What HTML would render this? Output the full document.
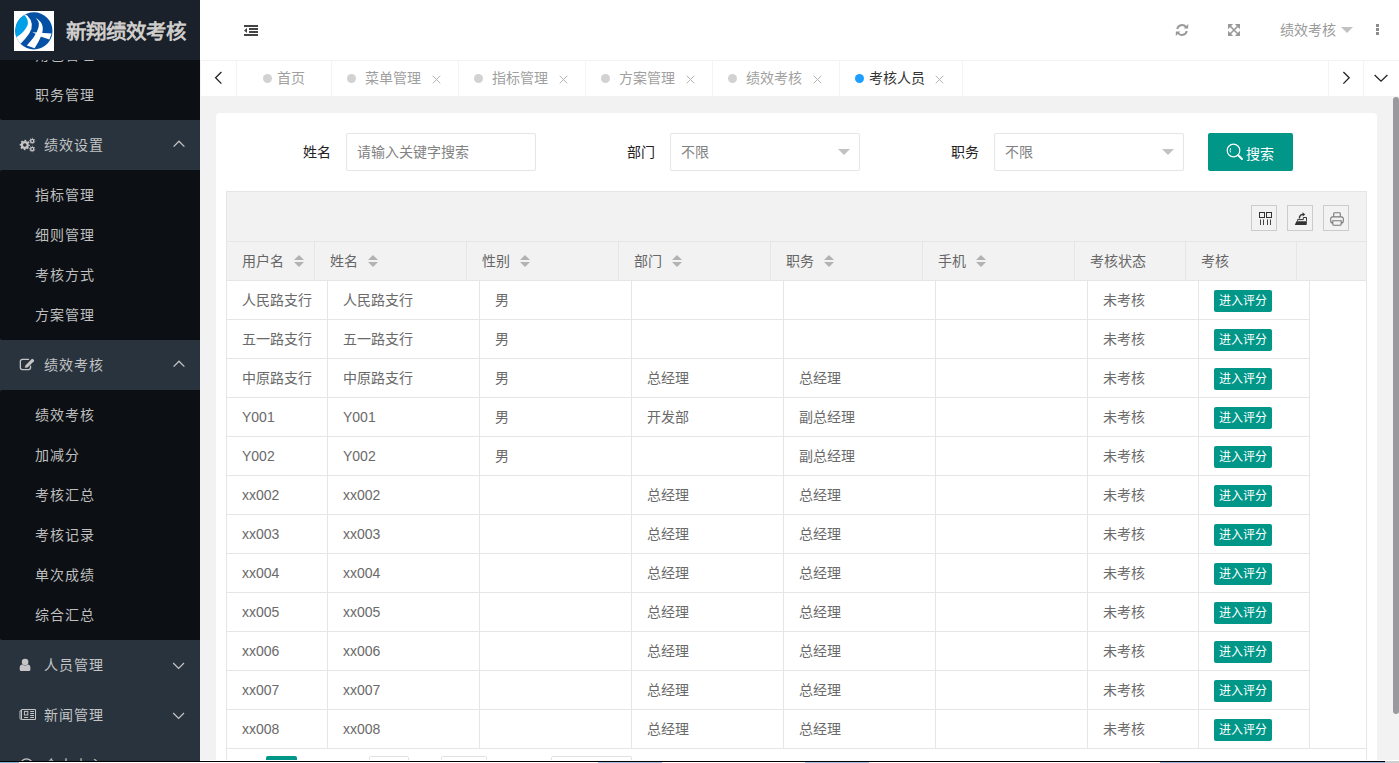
<!DOCTYPE html>
<html lang="zh-CN">
<head>
<meta charset="utf-8">
<title>新翔绩效考核</title>
<style>
*{box-sizing:border-box;margin:0;padding:0}
html,body{width:1399px;height:763px;overflow:hidden;background:#fff}
body{font-family:"Liberation Sans",sans-serif;font-size:14px;color:#666;position:relative}
.abs{position:absolute}
/* ---------- sidebar ---------- */
#side{position:absolute;left:0;top:0;width:200px;height:761px;background:#28333e;overflow:hidden}
#logo{position:absolute;left:0;top:0;width:200px;height:60px;background:#1b212a;z-index:3}
#logo .pic{position:absolute;left:14px;top:11px;width:40px;height:40px}
#logo .ttl{position:absolute;left:66px;top:1.5px;line-height:60px;font-size:20.5px;font-weight:bold;color:#cfcdcb;white-space:nowrap;letter-spacing:0}
.sub{position:absolute;left:0;width:200px;background:#0c0f13;border-radius:2px 0 0 2px}
.sub .it{position:absolute;left:35px;height:40px;line-height:40px;font-size:14px;letter-spacing:1px;color:#bfbfbf;white-space:nowrap}
.par{position:absolute;left:0;width:200px;height:50px}
.par .tx{position:absolute;left:44px;top:0;line-height:50px;font-size:14px;letter-spacing:1px;color:#c4c4c4;white-space:nowrap}
.par svg.ic{position:absolute;left:19px;top:17px;width:16px;height:16px}
.par svg.chev{position:absolute;left:172px;top:19px;width:14px;height:12px}
/* ---------- header ---------- */
#head{position:absolute;left:200px;top:0;width:1199px;height:60px;background:#fff}
#tabs{position:absolute;left:200px;top:60px;width:1199px;height:36px;background:#fff;border-top:1px solid #f4f4f4}
#tabs .dv{position:absolute;top:0;width:1px;height:35px;background:#f4f4f4}
#tabs .t{position:absolute;top:0;height:35px;line-height:35px;font-size:14px;color:#9f9f9f;white-space:nowrap}
#tabs .dot{position:absolute;top:13px;width:9px;height:9px;border-radius:50%;background:#d2d2d2}
#tabs svg.x{position:absolute;top:14px;width:9px;height:9px}
/* ---------- content ---------- */
#main{position:absolute;left:200px;top:96px;width:1199px;height:665px;background:#f2f2f2;overflow:hidden}
#card{position:absolute;left:16px;top:17px;width:1161px;height:700px;background:#fff;border-radius:4px}

/* form */
.lbl{position:absolute;top:20px;height:38px;line-height:38px;font-size:14px;color:#222;text-align:right;white-space:nowrap}
.inp{position:absolute;top:20px;width:190px;height:38px;border:1px solid #e6e6e6;border-radius:2px;background:#fff;line-height:36px;padding-left:10px;font-size:14px;color:#828282;white-space:nowrap}
.inp i{position:absolute;right:9px;top:15px;width:0;height:0;border:6px solid transparent;border-top-color:#c2c2c2;border-bottom:none}
#sbtn{position:absolute;left:992px;top:20px;width:85px;height:38px;background:#009688;border-radius:2px;color:#fff;font-size:14px}
/* table */
#tbl{position:absolute;left:10px;top:78px;width:1141px;height:620px;border:1px solid #e6e6e6;border-top:none;background:#fff;overflow:hidden}
#tool{position:absolute;left:0;top:0;width:1139px;height:51px;background:#f2f2f2;border-top:1px solid #e6e6e6;border-bottom:1px solid #e6e6e6}
#tool .b{position:absolute;top:13px;width:26px;height:26px;border:1px solid #ccc}
#thead{position:absolute;left:0;top:51px;width:1139px;height:39px;background:#f2f2f2;border-bottom:1px solid #e6e6e6;display:flex}
.th{flex:none;height:38px;line-height:38px;border-right:1px solid #e6e6e6;padding-left:15px;font-size:14px;color:#666;white-space:nowrap;position:relative}
.th u{display:inline-block;position:relative;width:10px;height:20px;margin-left:10px;vertical-align:middle;top:0}
.th u:before,.th u:after{content:"";position:absolute;left:0;width:0;height:0;border:5px solid transparent}
.th u:before{top:3px;border-top:none;border-bottom-color:#b2b2b2}
.th u:after{top:10px;border-bottom:none;border-top-color:#b2b2b2}
#tbody{position:absolute;left:0;top:90px;width:1139px}
.tr{display:flex;height:39px}
.td{flex:none;height:39px;line-height:38px;border-right:1px solid #e6e6e6;border-bottom:1px solid #e6e6e6;padding-left:15px;font-size:14px;color:#6a6a6a;white-space:nowrap;overflow:hidden}
.c0{width:101px}.c1,.c2,.c3,.c4,.c5{width:152px}.c6,.c7{width:111px}
.gb{display:inline-block;vertical-align:middle;position:relative;top:0px;height:22px;line-height:22px;padding:0 5px;background:#009688;color:#fff;font-size:12px;font-weight:500;border-radius:2px}
#page{position:absolute;left:0;top:557px;width:1139px;height:41px;border-top:1px solid #e6e6e6;font-size:12px;color:#333}
#page .pb{position:absolute;top:7px;height:26px;line-height:26px;text-align:center;white-space:nowrap}
#page .bx{border:1px solid #e2e2e2;border-radius:2px;background:#fff}
</style>
</head>
<body>
<!-- SIDEBAR -->
<div id="side">
  <div class="sub" style="top:-40px;height:160px">
    <div class="it" style="top:75px">角色管理</div>
    <div class="it" style="top:115px">职务管理</div>
  </div>
  <div class="par" style="top:120px"><svg class="ic" viewBox="0 0 20 16" style="left:18px;top:17px;width:20px;height:16px">
    <g fill="none" stroke="#c6c4c4">
      <circle cx="6.8" cy="8" r="2.9" stroke-width="2.2"/>
      <circle cx="6.8" cy="8" r="4.4" stroke-width="1.5" stroke-dasharray="1.75 1.705" stroke-dashoffset="0.9"/>
      <circle cx="14.2" cy="4" r="1.6" stroke-width="1.4"/>
      <circle cx="14.2" cy="4" r="2.7" stroke-width="0.9" stroke-dasharray="1.06 1.06" stroke-dashoffset="0.5"/>
      <circle cx="14.2" cy="12" r="1.6" stroke-width="1.4"/>
      <circle cx="14.2" cy="12" r="2.7" stroke-width="0.9" stroke-dasharray="1.06 1.06" stroke-dashoffset="0.5"/>
    </g></svg><span class="tx">绩效设置</span><svg class="chev" viewBox="0 0 14 12"><path d="M1.6 7.6 L7 2.2 L12.4 7.6" fill="none" stroke="#c6c4c4" stroke-width="1.25"/></svg></div>
  <div class="sub" style="top:170px;height:170px">
    <div class="it" style="top:5px">指标管理</div>
    <div class="it" style="top:45px">细则管理</div>
    <div class="it" style="top:85px">考核方式</div>
    <div class="it" style="top:125px">方案管理</div>
  </div>
  <div class="par" style="top:340px"><svg class="ic" viewBox="0 0 20 16" style="left:18px;top:17px;width:20px;height:16px">
    <path d="M10.6 2.35 H4.35 a2 2 0 0 0 -2 2 V10.55 a2 2 0 0 0 2 2 H10.55 a2 2 0 0 0 2 -2 V9.2" fill="none" stroke="#c6c4c4" stroke-width="1.3" stroke-linecap="round"/>
    <path d="M6.8 10.8 L7.4 8.4 L13.7 2.1 Q14.3 1.6 14.9 2.1 L15.9 3.1 Q16.4 3.7 15.9 4.3 L9.6 10.4 Z" fill="#c6c4c4"/>
    </svg><span class="tx">绩效考核</span><svg class="chev" viewBox="0 0 14 12"><path d="M1.6 7.6 L7 2.2 L12.4 7.6" fill="none" stroke="#c6c4c4" stroke-width="1.25"/></svg></div>
  <div class="sub" style="top:390px;height:250px">
    <div class="it" style="top:5px">绩效考核</div>
    <div class="it" style="top:45px">加减分</div>
    <div class="it" style="top:85px">考核汇总</div>
    <div class="it" style="top:125px">考核记录</div>
    <div class="it" style="top:165px">单次成绩</div>
    <div class="it" style="top:205px">综合汇总</div>
  </div>
  <div class="par" style="top:640px"><svg class="ic" viewBox="0 0 20 16" style="left:18px;top:17px;width:20px;height:16px">
    <circle cx="7.1" cy="5" r="3.3" fill="#c6c4c4"/>
    <path d="M1.7 12.6 V11 Q1.7 7.9 4.3 7.5 Q7.1 9.6 9.9 7.5 Q12.4 7.9 12.4 11 V12.6 Q12.4 14.1 10.9 14.1 H3.2 Q1.7 14.1 1.7 12.6 Z" fill="#c6c4c4"/>
    </svg><span class="tx">人员管理</span><svg class="chev" viewBox="0 0 14 12"><path d="M1.2 4 L6.6 9.4 L12 4" fill="none" stroke="#c6c4c4" stroke-width="1.25"/></svg></div>
  <div class="par" style="top:690px"><svg class="ic" viewBox="0 0 20 16" style="left:18px;top:17px;width:20px;height:16px">
    <g fill="none" stroke="#c6c4c4" stroke-width="1">
      <path d="M3.5 2.5 H17.5 V12.5 H3.3 Q2 12.5 2 11.2 V3.8 H3.5 M3.5 2.5 V12.5"/>
      <rect x="6.4" y="4.4" width="3.4" height="3.6"/>
      <path d="M12.2 4.5 H16 M12.2 6.5 H16 M12.2 8.5 H16 M6 10.5 H10.2 M12.2 10.5 H16"/>
    </g></svg><span class="tx">新闻管理</span><svg class="chev" viewBox="0 0 14 12"><path d="M1.2 4 L6.6 9.4 L12 4" fill="none" stroke="#c6c4c4" stroke-width="1.25"/></svg></div>
  <div class="par" style="top:740px"><svg class="ic" viewBox="0 0 20 16" style="left:18px;top:17px;width:20px;height:16px">
    <circle cx="8.5" cy="8" r="6.2" fill="none" stroke="#c6c4c4" stroke-width="1.2"/></svg><span class="tx">个人中心</span><svg class="chev" viewBox="0 0 14 12"><path d="M1.2 4 L6.6 9.4 L12 4" fill="none" stroke="#c6c4c4" stroke-width="1.25"/></svg></div>
  <div id="logo">
    <svg class="pic" viewBox="0 0 40 40">
      <defs><clipPath id="lc"><circle cx="19.9" cy="19.9" r="18.6"/></clipPath></defs>
      <rect width="40" height="40" fill="#fff"/>
      <circle cx="19.9" cy="19.9" r="18.6" fill="#0450a5"/>
      <g clip-path="url(#lc)">
        <path d="M9.5 3 L13.3 4.6 Q21.5 13 15.2 22.5 Q11.5 28 6.3 33 L1 27 Z" fill="#fff"/>
        <path d="M10 3.6 Q15 9 13.6 14 Q11 21 1.5 26.8 L0 10 Z" fill="#00a0e9"/>
        <path d="M21.6 7 Q26 10.5 24.6 16 Q23.3 21.5 19.5 26.5 Q16 31 12.8 34.4 L20.6 37.2 Q25 30.5 27 25.6 Q30 18 28 13.5 Q26.5 9.5 21.6 7 Z" fill="#fff"/>
        <path d="M18.4 21.3 L37.6 22.6 L35.4 28.4 L26.5 25.6 L22.5 23.2 Z" fill="#fff"/>
      </g>
    </svg>
    <div class="ttl">新翔绩效考核</div>
  </div>
</div>
<!-- HEADER -->
<div id="head">
  <svg class="abs" style="left:44px;top:24px" width="16" height="14" viewBox="0 0 16 14">
    <g fill="#444"><rect x="0" y="1" width="14" height="2"/><rect x="5" y="4" width="9" height="2"/><rect x="5" y="7" width="9" height="2"/><rect x="0" y="10" width="14" height="2"/><path d="M0 6.5 L3 4 V9 Z"/></g>
  </svg>
  <svg class="abs" style="left:975px;top:23px" width="14" height="14" viewBox="0 0 14 14">
    <g fill="none" stroke="#999" stroke-width="1.9">
      <path d="M2.2 6 A5 5 0 0 1 11 4"/><path d="M11.8 8 A5 5 0 0 1 3 10"/>
    </g>
    <path d="M13.2 1 V5.6 H8.6 Z" fill="#999"/><path d="M0.8 13 V8.4 H5.4 Z" fill="#999"/>
  </svg>
  <svg class="abs" style="left:1027px;top:23px" width="14" height="14" viewBox="0 0 14 14">
    <path d="M3 3 L11 11 M11 3 L3 11" stroke="#999" stroke-width="1.6" fill="none"/>
    <g fill="#999"><path d="M1 1 H6.2 L1 6.2 Z"/><path d="M13 1 V6.2 L7.8 1 Z"/><path d="M1 13 V7.8 L6.2 13 Z"/><path d="M13 13 H7.8 L13 7.8 Z"/></g>
  </svg>
  <div class="abs" style="left:1080px;top:0;line-height:60px;font-size:14px;color:#999;white-space:nowrap">绩效考核</div>
  <div class="abs" style="left:1141px;top:27px;width:0;height:0;border:6px solid transparent;border-top-color:#c2c2c2;border-bottom:none"></div>
  <div class="abs" style="left:1176px;top:24px;width:3px;height:3px;background:#8c8c8c"></div>
  <div class="abs" style="left:1176px;top:28px;width:3px;height:3px;background:#8c8c8c"></div>
  <div class="abs" style="left:1176px;top:32px;width:3px;height:3px;background:#8c8c8c"></div>
</div>
<div id="tabs">
<div class="dv" style="left:0px"></div><div class="dv" style="left:36px"></div><div class="dv" style="left:131px"></div><div class="dv" style="left:258px"></div><div class="dv" style="left:385px"></div><div class="dv" style="left:512px"></div><div class="dv" style="left:639px"></div><div class="dv" style="left:762px"></div><div class="dv" style="left:1128px"></div><div class="dv" style="left:1163px"></div>
<div class="dot" style="left:63px"></div><div class="t" style="left:77px">首页</div>
<div class="dot" style="left:147px"></div><div class="t" style="left:165px">菜单管理</div><svg class="x" style="left:232px" viewBox="0 0 9 9"><path d="M0.7 0.7 L8.3 8.3 M8.3 0.7 L0.7 8.3" stroke="#b4b4b4" stroke-width="1" fill="none"/></svg>
<div class="dot" style="left:274px"></div><div class="t" style="left:292px">指标管理</div><svg class="x" style="left:359px" viewBox="0 0 9 9"><path d="M0.7 0.7 L8.3 8.3 M8.3 0.7 L0.7 8.3" stroke="#b4b4b4" stroke-width="1" fill="none"/></svg>
<div class="dot" style="left:401px"></div><div class="t" style="left:419px">方案管理</div><svg class="x" style="left:486px" viewBox="0 0 9 9"><path d="M0.7 0.7 L8.3 8.3 M8.3 0.7 L0.7 8.3" stroke="#b4b4b4" stroke-width="1" fill="none"/></svg>
<div class="dot" style="left:528px"></div><div class="t" style="left:546px">绩效考核</div><svg class="x" style="left:613px" viewBox="0 0 9 9"><path d="M0.7 0.7 L8.3 8.3 M8.3 0.7 L0.7 8.3" stroke="#b4b4b4" stroke-width="1" fill="none"/></svg>
<div class="dot" style="left:655px;background:#1e9fff"></div><div class="t" style="left:669px;color:#333">考核人员</div><svg class="x" style="left:735px" viewBox="0 0 9 9"><path d="M0.7 0.7 L8.3 8.3 M8.3 0.7 L0.7 8.3" stroke="#b4b4b4" stroke-width="1" fill="none"/></svg>
<svg class="abs" style="left:12px;top:8px" width="14" height="18" viewBox="0 0 14 18"><path d="M9.4 3 L3.6 8.8 L9.4 14.6" fill="none" stroke="#222" stroke-width="1.3"/></svg>
<svg class="abs" style="left:1139px;top:8px" width="14" height="18" viewBox="0 0 14 18"><path d="M4.4 3 L10.2 8.8 L4.4 14.6" fill="none" stroke="#222" stroke-width="1.3"/></svg>
<svg class="abs" style="left:1172px;top:9px" width="18" height="18" viewBox="0 0 18 18"><path d="M2.6 5 L9 11.2 L15.4 5" fill="none" stroke="#222" stroke-width="1.3"/></svg>
</div>
<!-- MAIN -->
<div id="main">
  <div id="card">
    <div class="lbl" style="left:20px;width:95px">姓名</div>
    <div class="inp" style="left:130px">请输入关键字搜索</div>
    <div class="lbl" style="left:344px;width:95px">部门</div>
    <div class="inp" style="left:454px">不限<i></i></div>
    <div class="lbl" style="left:668px;width:95px">职务</div>
    <div class="inp" style="left:778px">不限<i></i></div>
    <div id="sbtn">
      <svg class="abs" style="left:17px;top:9px" width="20" height="20" viewBox="0 0 20 20"><circle cx="8.5" cy="8.5" r="6.3" fill="none" stroke="#fff" stroke-width="1.2"/><path d="M13.2 13.2 L17 17" stroke="#fff" stroke-width="2" stroke-linecap="round"/><path d="M5.6 6.2 Q4.6 8.3 5.6 10.4" fill="none" stroke="#fff" stroke-width="0.9"/></svg>
      <div class="abs" style="left:38px;top:2px;line-height:38px;white-space:nowrap;font-weight:500">搜索</div>
    </div>
    <div id="tbl">
      <div id="tool">
        <div class="b" style="left:1024px"><svg class="abs" style="left:4px;top:4px" width="16" height="16" viewBox="0 0 16 16"><g fill="none" stroke="#333" stroke-width="1"><rect x="3.5" y="2.5" width="5" height="5"/><rect x="10.5" y="2.5" width="5" height="5"/><path d="M4.5 9.5 V15 M7.5 9.5 V15 M11.5 9.5 V15 M14.5 9.5 V15" stroke="#444"/></g></svg></div>
        <div class="b" style="left:1060px"><svg class="abs" style="left:4px;top:4px" width="16" height="16" viewBox="0 0 16 16"><path d="M2.8 15 L4.4 11.2 H15 L14.6 15 Z" fill="#333"/><path d="M5.5 10.8 V9.6 H11.3 V7.5 H14.5 V10.8" fill="none" stroke="#333" stroke-width="1"/><path d="M7.4 8.6 Q7.4 4.4 11.2 4.4" fill="none" stroke="#333" stroke-width="1.4"/><path d="M10.6 2.2 L13.2 4.4 L10.6 6.6 Z" fill="#333"/></svg></div>
        <div class="b" style="left:1096px"><svg class="abs" style="left:4px;top:4px" width="16" height="16" viewBox="0 0 16 16"><g fill="none" stroke="#7a7a7a" stroke-width="1.1"><path d="M5.7 6.8 V3.7 Q5.7 2.8 6.7 2.8 H11.3 Q12.3 2.8 12.3 3.7 V6.8"/><rect x="2.7" y="6.9" width="12.6" height="6" rx="2"/><path d="M4.8 10.8 H13.2 V14.3 Q13.2 15.3 12.2 15.3 H5.8 Q4.8 15.3 4.8 14.3 Z" fill="#f2f2f2"/></g></svg></div>
      </div>
      <div id="thead">
        <div class="th" style="width:88px">用户名<u></u></div><div class="th" style="width:152px">姓名<u></u></div><div class="th" style="width:152px">性别<u></u></div><div class="th" style="width:152px">部门<u></u></div><div class="th" style="width:152px">职务<u></u></div><div class="th" style="width:152px">手机<u></u></div><div class="th" style="width:111px">考核状态</div><div class="th" style="width:111px">考核</div>
      </div>
      <div id="tbody">
<div class="tr"><div class="td c0">人民路支行</div><div class="td c1">人民路支行</div><div class="td c2">男</div><div class="td c3"></div><div class="td c4"></div><div class="td c5"></div><div class="td c6">未考核</div><div class="td c7"><span class="gb">进入评分</span></div></div>
<div class="tr"><div class="td c0">五一路支行</div><div class="td c1">五一路支行</div><div class="td c2">男</div><div class="td c3"></div><div class="td c4"></div><div class="td c5"></div><div class="td c6">未考核</div><div class="td c7"><span class="gb">进入评分</span></div></div>
<div class="tr"><div class="td c0">中原路支行</div><div class="td c1">中原路支行</div><div class="td c2">男</div><div class="td c3">总经理</div><div class="td c4">总经理</div><div class="td c5"></div><div class="td c6">未考核</div><div class="td c7"><span class="gb">进入评分</span></div></div>
<div class="tr"><div class="td c0">Y001</div><div class="td c1">Y001</div><div class="td c2">男</div><div class="td c3">开发部</div><div class="td c4">副总经理</div><div class="td c5"></div><div class="td c6">未考核</div><div class="td c7"><span class="gb">进入评分</span></div></div>
<div class="tr"><div class="td c0">Y002</div><div class="td c1">Y002</div><div class="td c2">男</div><div class="td c3"></div><div class="td c4">副总经理</div><div class="td c5"></div><div class="td c6">未考核</div><div class="td c7"><span class="gb">进入评分</span></div></div>
<div class="tr"><div class="td c0">xx002</div><div class="td c1">xx002</div><div class="td c2"></div><div class="td c3">总经理</div><div class="td c4">总经理</div><div class="td c5"></div><div class="td c6">未考核</div><div class="td c7"><span class="gb">进入评分</span></div></div>
<div class="tr"><div class="td c0">xx003</div><div class="td c1">xx003</div><div class="td c2"></div><div class="td c3">总经理</div><div class="td c4">总经理</div><div class="td c5"></div><div class="td c6">未考核</div><div class="td c7"><span class="gb">进入评分</span></div></div>
<div class="tr"><div class="td c0">xx004</div><div class="td c1">xx004</div><div class="td c2"></div><div class="td c3">总经理</div><div class="td c4">总经理</div><div class="td c5"></div><div class="td c6">未考核</div><div class="td c7"><span class="gb">进入评分</span></div></div>
<div class="tr"><div class="td c0">xx005</div><div class="td c1">xx005</div><div class="td c2"></div><div class="td c3">总经理</div><div class="td c4">总经理</div><div class="td c5"></div><div class="td c6">未考核</div><div class="td c7"><span class="gb">进入评分</span></div></div>
<div class="tr"><div class="td c0">xx006</div><div class="td c1">xx006</div><div class="td c2"></div><div class="td c3">总经理</div><div class="td c4">总经理</div><div class="td c5"></div><div class="td c6">未考核</div><div class="td c7"><span class="gb">进入评分</span></div></div>
<div class="tr"><div class="td c0">xx007</div><div class="td c1">xx007</div><div class="td c2"></div><div class="td c3">总经理</div><div class="td c4">总经理</div><div class="td c5"></div><div class="td c6">未考核</div><div class="td c7"><span class="gb">进入评分</span></div></div>
<div class="tr"><div class="td c0">xx008</div><div class="td c1">xx008</div><div class="td c2"></div><div class="td c3">总经理</div><div class="td c4">总经理</div><div class="td c5"></div><div class="td c6">未考核</div><div class="td c7"><span class="gb">进入评分</span></div></div>
      </div>
      <div id="page">
        <div class="pb" style="left:7px;width:32px;color:#d2d2d2">&lt;</div>
        <div class="pb" style="left:39px;width:31px;background:#009688;color:#fff;border-radius:2px">1</div>
        <div class="pb" style="left:70px;width:31px">2</div>
        <div class="pb" style="left:101px;width:32px">&gt;</div>
        <div class="pb" style="left:143px;width:40px;text-align:left">到第</div>
        <div class="pb bx" style="left:142px;width:40px"></div>
        <div class="pb" style="left:192px;width:20px">页</div>
        <div class="pb bx" style="left:214px;width:46px">确定</div>
        <div class="pb" style="left:270px;width:50px">共 16 条</div>
        <div class="pb bx" style="left:324px;width:81px">12 条/页</div>
      </div>
    </div>
  </div>
  <div class="abs" style="left:1193px;top:1px;width:6px;height:617px;border-radius:3px;background:#9a9a9e"></div>
</div>
<!-- window bottom edge -->
<div class="abs" style="left:200px;top:760px;width:1199px;height:1px;background:#fff"></div>
<div class="abs" style="left:0;top:761px;width:1399px;height:1px;background:#000"></div>
<div class="abs" style="left:0;top:762px;width:1399px;height:1px;background:#fff"></div>
<div class="abs" style="left:0;top:762px;width:19px;height:1px;background:#7fb5d5"></div>
<div class="abs" style="left:598px;top:762px;width:64px;height:1px;background:#9cc0e6"></div>
<div class="abs" style="left:805px;top:762px;width:64px;height:1px;background:#9cc0e6"></div>
<div class="abs" style="left:1160px;top:762px;width:225px;height:1px;background:#8fb3da"></div>
<div class="abs" style="left:1385px;top:761px;width:14px;height:2px;background:#d0d0d0"></div>
</body>
</html>
